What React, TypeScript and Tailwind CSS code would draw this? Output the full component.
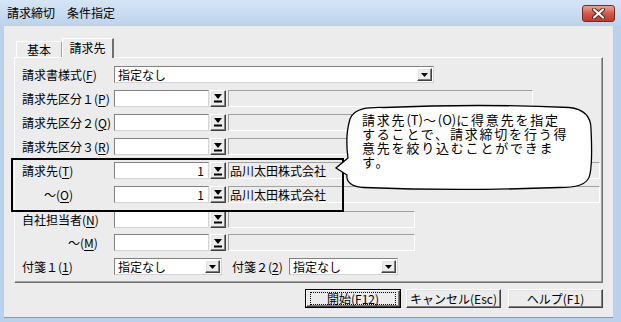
import React from "react";

const raised =
  "border border-t-white border-l-white border-r-[#404040] border-b-[#404040] shadow-[inset_-1px_-1px_#808080,inset_1px_1px_#e3e3e3] bg-[#ececec]";
const sunkenWhite =
  "bg-white border border-t-[#828282] border-l-[#828282] border-r-[#d4d4d4] border-b-[#d4d4d4]";
const sunkenGray =
  "border border-t-[#a0a0a0] border-l-[#a0a0a0] border-r-white border-b-white";

function U({ c }: { c: string }) {
  return <span className="underline underline-offset-[2px] decoration-1">{c}</span>;
}

function Label({ children, pl = "" }: { children: React.ReactNode; pl?: string }) {
  return (
    <div className={`w-[92px] shrink-0 text-[12px] leading-[17px] text-black whitespace-nowrap ${pl}`}>
      {children}
    </div>
  );
}

function PickButton() {
  return (
    <div className={`ml-[1px] w-[16px] h-[17px] shrink-0 flex items-center justify-center ${raised}`}>
      <svg width="10" height="10" viewBox="0 0 10 10">
        <polygon points="1,1 9,1 5,6" fill="#000" />
        <rect x="1" y="7.5" width="8" height="2" fill="#000" />
      </svg>
    </div>
  );
}

function ComboButton() {
  return (
    <div className={`w-[15px] h-[13px] flex items-center justify-center ${raised}`}>
      <svg width="7" height="4" viewBox="0 0 7 4">
        <polygon points="0,0 7,0 3.5,4" fill="#000" />
      </svg>
    </div>
  );
}

function Combo({ w, text }: { w: string; text: string }) {
  return (
    <div className={`${w} h-[17px] shrink-0 flex items-center justify-between pl-[3px] pr-[1px] ${sunkenWhite}`}>
      <span className="text-[12px] leading-[15px] text-black">{text}</span>
      <ComboButton />
    </div>
  );
}

function PickRow({
  label,
  pl = "",
  value = "",
  name = "",
  fieldW,
  h = "h-[24px]",
}: {
  label: React.ReactNode;
  pl?: string;
  value?: string;
  name?: string;
  fieldW: string;
  h?: string;
}) {
  return (
    <div className={`flex items-start ${h}`}>
      <Label pl={pl}>{label}</Label>
      <div className={`w-[95px] h-[17px] shrink-0 flex items-center justify-end pr-[4px] ${sunkenWhite}`}>
        <span className="text-[12px] leading-[15px] text-black">{value}</span>
      </div>
      <PickButton />
      <div className={`ml-[2px] ${fieldW} h-[17px] shrink-0 flex items-center pl-[1px] ${sunkenGray}`}>
        <span className="text-[12px] leading-[15px] text-black whitespace-nowrap">{name}</span>
      </div>
    </div>
  );
}

export default function App() {
  return (
    <div className="w-[621px] h-[322px] flex flex-col bg-[#b9d1ea] font-['Noto_Sans_CJK_JP',sans-serif] overflow-hidden relative select-none">
      {/* title bar */}
      <div className="h-[26px] shrink-0 flex items-start justify-between bg-gradient-to-b from-[#d6e5f6] to-[#bcd3ec]">
        <div className="pl-[7px] pt-[5px] text-[12px] leading-[16px] text-black whitespace-nowrap">
          請求締切　条件指定
        </div>
        <div className="mt-[5px] mr-[6px] w-[33px] h-[17px] rounded-[3px] border border-[#7a2a22] bg-gradient-to-b from-[#e8a493] via-[#d2594a] to-[#c0392b] flex items-center justify-center">
          <svg width="13" height="11" viewBox="0 0 13 11">
            <path d="M2 1.5 L11 9.5 M11 1.5 L2 9.5" stroke="#5a1d16" strokeWidth="4" strokeLinecap="round" />
            <path d="M2 1.5 L11 9.5 M11 1.5 L2 9.5" stroke="#ffffff" strokeWidth="2.2" strokeLinecap="round" />
          </svg>
        </div>
      </div>

      {/* body */}
      <div className="flex-1 ml-[4px] mr-[8px] mb-[4px] bg-[#ececec] flex flex-col pt-[12px] pl-[10px] pr-[10px] border-b border-[#6f9fcf]">
        {/* tabs */}
        <div className="h-[19px] flex items-end pl-[2px] relative z-10">
          <div className="w-[46px] h-[16px] border-t border-l border-white border-r border-r-[#a0a0a0] flex items-center justify-center text-[12px] leading-[14px] text-black">
            基本
          </div>
          <div className="w-[52px] h-[20px] -mb-[1px] bg-[#ececec] border-t border-l border-white border-r-2 border-r-[#707070] flex items-start justify-center pt-[2px] text-[12px] leading-[14px] text-black">
            請求先
          </div>
        </div>

        {/* panel */}
        <div className="w-[589px] h-[226px] border border-t-white border-l-white border-r-[#707070] border-b-[#707070] shadow-[inset_-1px_-1px_#a0a0a0] pt-[8px] pl-[7px] flex flex-col">
          <div className="flex items-start h-[24px]">
            <Label>
              請求書様式(<U c="F" />)
            </Label>
            <Combo w="w-[320px]" text="指定なし" />
          </div>
          <PickRow label={<>請求先区分１(<U c="P" />)</>} fieldW="w-[305px]" />
          <PickRow label={<>請求先区分２(<U c="Q" />)</>} fieldW="w-[305px]" h="h-[25px]" />
          <PickRow label={<>請求先区分３(<U c="R" />)</>} fieldW="w-[305px]" />
          <PickRow label={<>請求先(<U c="T" />)</>} value="1" name="品川太田株式会社" fieldW="w-[372px]" />
          <PickRow label={<>～(<U c="O" />)</>} pl="pl-[22px]" value="1" name="品川太田株式会社" fieldW="w-[372px]" h="h-[25px]" />
          <PickRow label={<>自社担当者(<U c="N" />)</>} fieldW="w-[187px]" />
          <PickRow label={<>～(<U c="M" />)</>} pl="pl-[46px]" fieldW="w-[187px]" />
          <div className="flex items-start h-[24px]">
            <Label>
              付箋１(<U c="1" />)
            </Label>
            <Combo w="w-[108px]" text="指定なし" />
            <div className="ml-[10px] w-[57px] shrink-0 text-[12px] leading-[17px] text-black whitespace-nowrap">
              付箋２(<U c="2" />)
            </div>
            <Combo w="w-[109px]" text="指定なし" />
          </div>
        </div>

        {/* buttons */}
        <div className="mt-[6px] flex justify-end gap-[5px]">
          <div className="w-[96px] h-[19px] border border-black">
            <div className={`w-full h-full flex items-center justify-center ${raised}`}>
              <div className="w-[86px] h-[13px] border border-dotted border-black flex items-center justify-center text-[12px] leading-[12px] text-black">
                開始(F12)
              </div>
            </div>
          </div>
          <div className={`w-[95px] h-[19px] flex items-center justify-center text-[12px] leading-[12px] text-black ${raised}`}>
            キャンセル(Esc)
          </div>
          <div className={`ml-[2px] w-[95px] h-[19px] flex items-center justify-center text-[12px] leading-[12px] text-black ${raised}`}>
            ヘルプ(F1)
          </div>
        </div>
      </div>

      {/* annotation highlight */}
      <div className="absolute left-[11px] top-[158px] w-[333px] h-[54px] border-2 border-black pointer-events-none" />

      {/* balloon */}
      <div className="absolute left-[334px] top-[104px] w-[262px] h-[88px] pointer-events-none">
        <svg className="absolute inset-0" width="262" height="88" viewBox="0 0 262 88">
          <path
            d="M14 54 C12 40 13 25 16 15 C20 4 35 3 50 3.5 C110 1 180 1 235 3.5 C250 5 257 12 257 25 C258 45 258 60 256 70 C254 82 240 83.5 225 83.5 C160 86 90 86 30 83.5 C18 83 12 78 13 71 L2 64 Z"
            fill="#ffffff"
            stroke="#000000"
            strokeWidth="1.3"
          />
        </svg>
        <div className="absolute left-[28px] top-[9px] flex flex-col text-[13px] leading-[14px] tracking-[1.8px] text-black whitespace-nowrap">
          <div className="h-[14px]">
            請求先<span className="tracking-[0px]">(T)</span>～<span className="tracking-[0px]">(O)</span>に得意先を指定
          </div>
          <div className="h-[14px]">することで、請求締切を行う得</div>
          <div className="h-[14px]">意先を絞り込むことができま</div>
          <div className="h-[14px]">す。</div>
        </div>
      </div>
    </div>
  );
}
